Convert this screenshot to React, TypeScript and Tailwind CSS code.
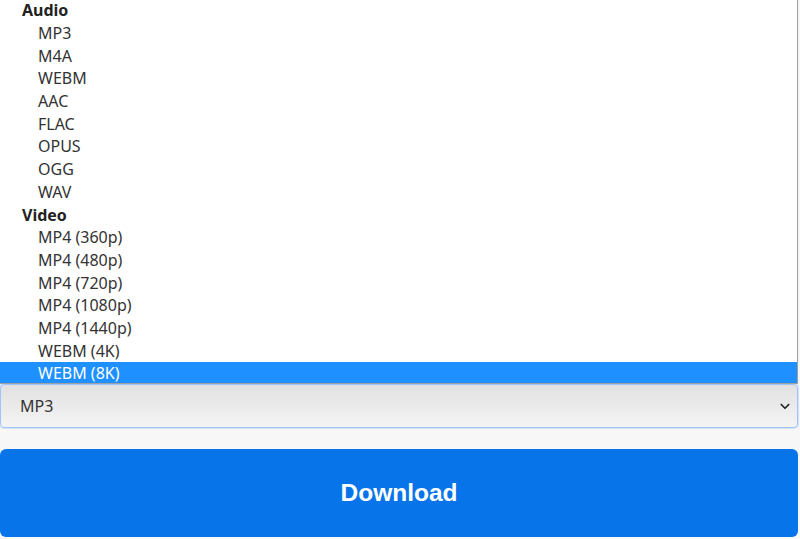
const audio = ["MP3", "M4A", "WEBM", "AAC", "FLAC", "OPUS", "OGG", "WAV"];
const video = [
  "MP4 (360p)",
  "MP4 (480p)",
  "MP4 (720p)",
  "MP4 (1080p)",
  "MP4 (1440p)",
  "WEBM (4K)",
  "WEBM (8K)",
];

const font = { fontFamily: "'Noto Sans', 'Open Sans', sans-serif" };

const Group = ({ label, items, selected }: { label: string; items: string[]; selected?: string }) => (
  <div>
    <div className="h-[22.7px] flex items-center pl-[22px] font-bold text-[#222]">{label}</div>
    {items.map((item) => (
      <div
        key={item}
        className={
          item === selected
            ? "h-[22.7px] flex items-center pl-[38px] bg-[#1e90ff] text-white"
            : "h-[22.7px] flex items-center pl-[38px] text-[#333]"
        }
      >
        {item}
      </div>
    ))}
  </div>
);

export default function App() {
  return (
    <div className="w-[800px] h-[539px] overflow-hidden bg-[#f7f7f7] relative" style={font}>
      <div className="w-[798px] pt-[384px]">
        {/* focused select */}
        <div className="h-[44px] rounded-[4px] border border-[#9ec5fe] bg-gradient-to-b from-[#e1e1e1] to-[#f4f4f4] shadow-[0_0_0_1px_rgba(13,110,253,0.15)] flex items-center justify-between pl-[19px] pr-[6px] text-[16px] text-[#333]">
          <span>MP3</span>
          <svg width="12" height="12" viewBox="0 0 16 16" fill="none" stroke="#222" strokeWidth="2.2" strokeLinecap="round" strokeLinejoin="round">
            <path d="M3 6l5 5 5-5" />
          </svg>
        </div>
        <div className="h-[21px]" />
        <button className="w-full h-[88px] rounded-[6px] bg-[#0874ea] text-white text-[24.5px] font-bold" style={{ fontFamily: "'Liberation Sans', Arial, sans-serif" }}>
          Download
        </button>
      </div>

      {/* open native dropdown list */}
      <div className="absolute left-0 top-[-1px] w-[798px] h-[385px] bg-white border-r border-b border-[#a0a0a0] text-[16px] leading-none overflow-hidden">
        <Group label="Audio" items={audio} />
        <Group label="Video" items={video} selected="WEBM (8K)" />
      </div>
    </div>
  );
}
